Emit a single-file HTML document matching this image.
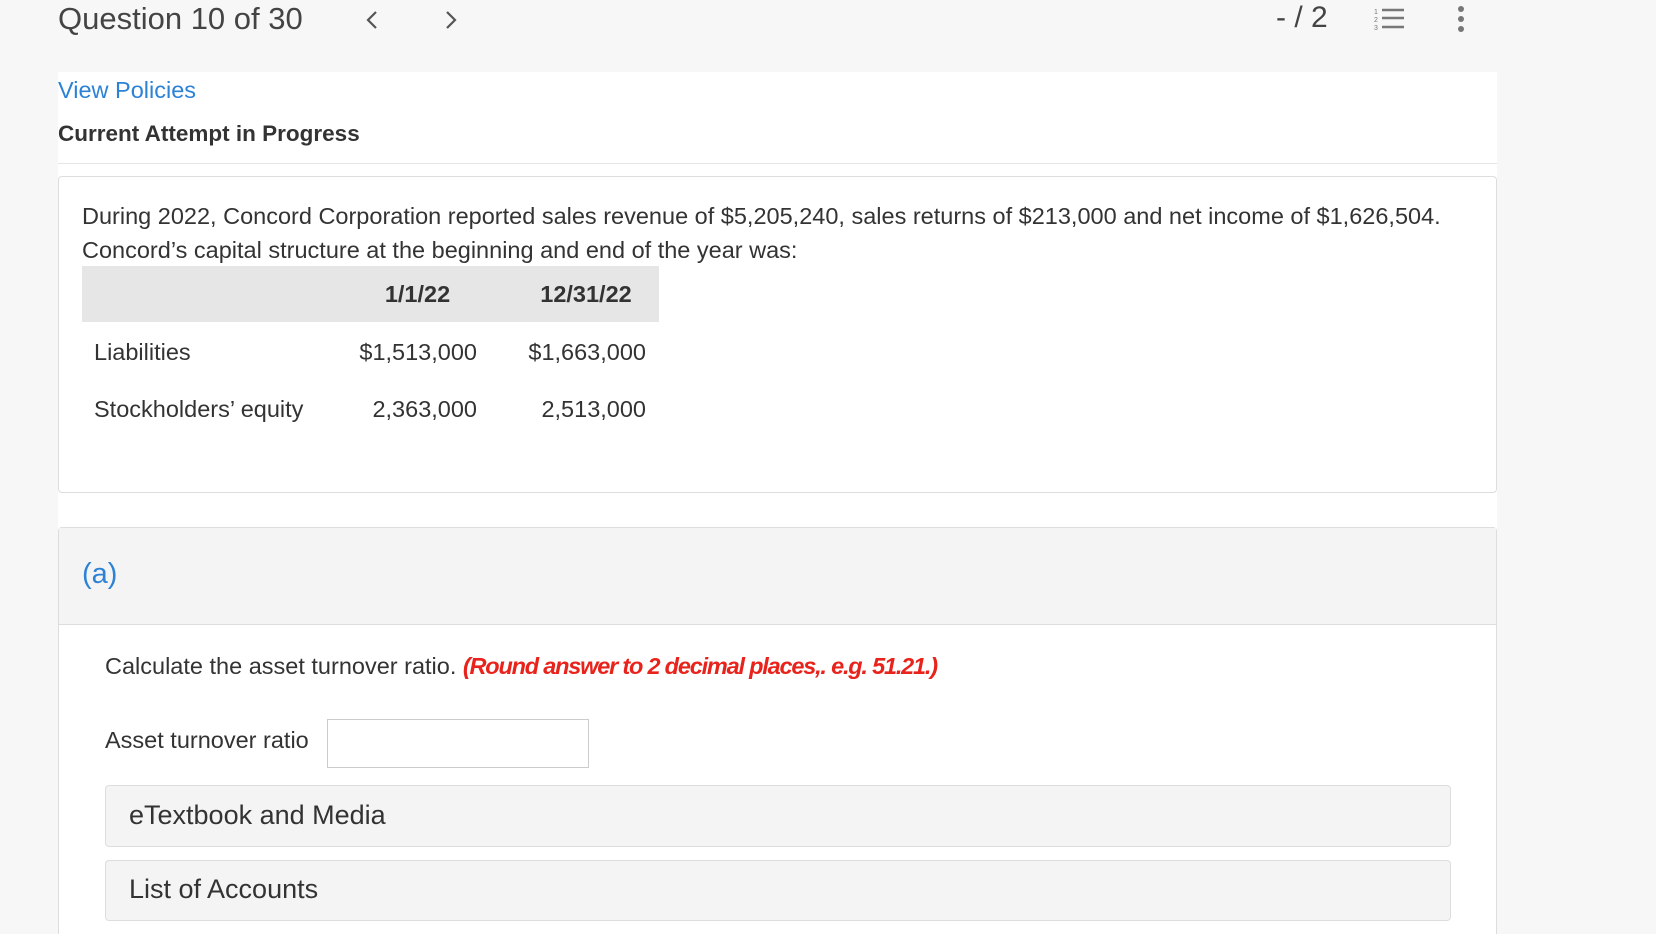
<!DOCTYPE html>
<html style="width:1656px;height:934px;overflow:hidden"><head><style>
*{box-sizing:border-box;margin:0;padding:0}
body{width:1656px;height:934px;overflow:hidden;background:#f7f7f7;font-family:"Liberation Sans",sans-serif;color:#333;position:relative}
.a{position:absolute;white-space:nowrap}
.main{position:absolute;left:58px;top:72px;width:1439px;height:862px;background:#fff}
.card{position:absolute;border:1px solid #ddd;border-radius:4px;background:#fff}
.t{font-size:23.5px;color:#333}
</style></head><body>
<div class="a" style="left:58px;top:1px;font-size:31px;color:#444">Question 10 of 30</div>
<svg class="a" style="left:364px;top:9px" width="16" height="22"><path d="M12 3 L4 11 L12 19" stroke="#555" stroke-width="2.2" fill="none"/></svg>
<svg class="a" style="left:443px;top:9px" width="16" height="22"><path d="M4 3 L12 11 L4 19" stroke="#555" stroke-width="2.2" fill="none"/></svg>
<div class="a" style="left:1276px;top:1px;font-size:30px;color:#444">- / 2</div>
<svg class="a" style="left:1374px;top:6px" width="32" height="26">
<text x="0" y="8" font-size="7" fill="#777" font-family="Liberation Sans">1</text>
<text x="0" y="16" font-size="7" fill="#777" font-family="Liberation Sans">2</text>
<text x="0" y="24" font-size="7" fill="#777" font-family="Liberation Sans">3</text>
<path d="M8 4H30M8 12H30M8 21H30" stroke="#777" stroke-width="2.5"/></svg>
<svg class="a" style="left:1454px;top:6px" width="14" height="26"><circle cx="7" cy="3" r="3" fill="#777"/><circle cx="7" cy="13" r="3" fill="#777"/><circle cx="7" cy="23" r="3" fill="#777"/></svg>
<div class="main"></div>
<div class="a" style="left:58px;top:77px;font-size:23.5px;color:#2d82d6">View Policies</div>
<div class="a" style="left:58px;top:121px;font-size:22.5px;font-weight:bold;color:#333">Current Attempt in Progress</div>
<div class="a" style="left:58px;top:163px;width:1439px;height:1px;background:#e5e5e5"></div>
<div class="card" style="left:58px;top:176px;width:1439px;height:317px"></div>
<div class="a t" style="left:82px;top:203px">During 2022, Concord Corporation reported sales revenue of $5,205,240, sales returns of $213,000 and net income of $1,626,504.</div>
<div class="a t" style="left:82px;top:237px">Concord’s capital structure at the beginning and end of the year was:</div>
<div class="a" style="left:82px;top:266px;width:577px;height:56px;background:#e6e6e6"></div>
<div class="a t" style="left:360px;top:281px;width:115px;text-align:center;font-weight:bold">1/1/22</div>
<div class="a t" style="left:525px;top:281px;width:122px;text-align:center;font-weight:bold">12/31/22</div>
<div class="a t" style="left:94px;top:339px">Liabilities</div>
<div class="a t" style="left:330px;top:339px;width:147px;text-align:right">$1,513,000</div>
<div class="a t" style="left:500px;top:339px;width:146px;text-align:right">$1,663,000</div>
<div class="a t" style="left:94px;top:396px">Stockholders’ equity</div>
<div class="a t" style="left:330px;top:396px;width:147px;text-align:right">2,363,000</div>
<div class="a t" style="left:500px;top:396px;width:146px;text-align:right">2,513,000</div>
<div class="card" style="left:58px;top:527px;width:1439px;height:407px;border-bottom:none;border-radius:4px 4px 0 0"></div>
<div class="a" style="left:59px;top:528px;width:1437px;height:97px;background:#f4f4f4;border-bottom:1px solid #ddd"></div>
<div class="a" style="left:82px;top:558px;font-size:29px;color:#2d82d6">(a)</div>
<div class="a t" style="left:105px;top:653px">Calculate the asset turnover ratio. <i style="color:#e8231b;font-weight:bold;letter-spacing:-1.2px">(Round answer to 2 decimal places,. e.g. 51.21.)</i></div>
<div class="a t" style="left:105px;top:727px">Asset turnover ratio</div>
<div class="a" style="left:327px;top:719px;width:262px;height:49px;border:1px solid #ccc;background:#fff"></div>
<div class="a" style="left:105px;top:785px;width:1346px;height:62px;border:1px solid #ddd;border-radius:4px;background:#f4f4f4"></div>
<div class="a" style="left:129px;top:800px;font-size:27px;color:#333">eTextbook and Media</div>
<div class="a" style="left:105px;top:860px;width:1346px;height:61px;border:1px solid #ddd;border-radius:4px;background:#f4f4f4"></div>
<div class="a" style="left:129px;top:874px;font-size:27px;color:#333">List of Accounts</div>
</body></html>
